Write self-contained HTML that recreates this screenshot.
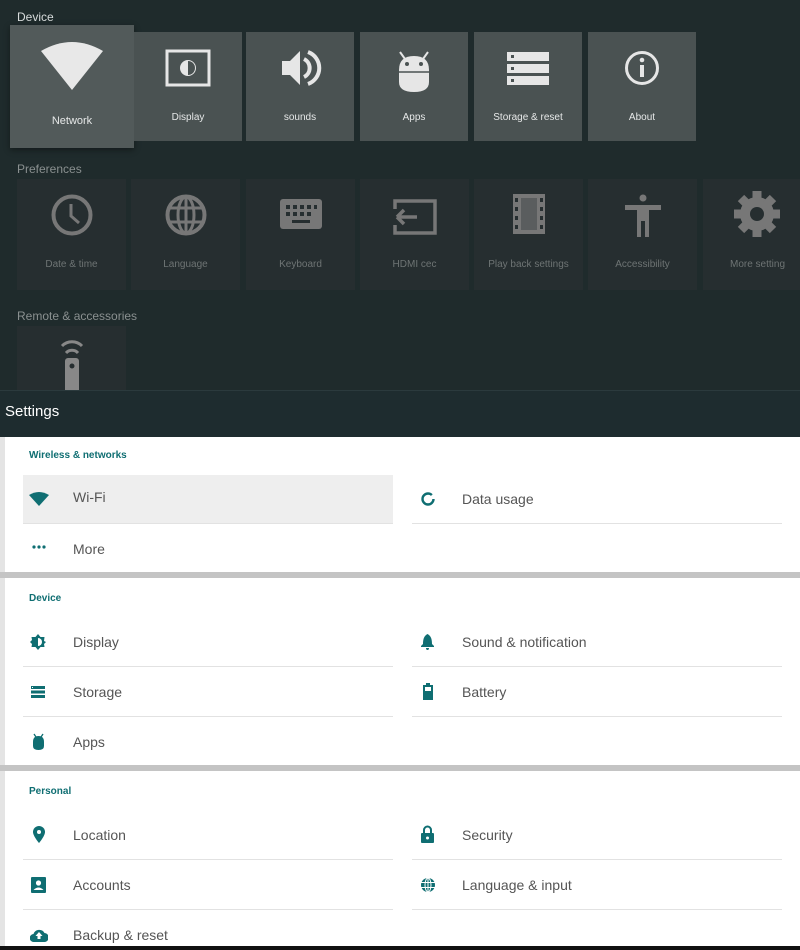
<!DOCTYPE html>
<html><head><meta charset="utf-8"><style>
*{margin:0;padding:0;box-sizing:border-box}
body{width:800px;height:950px;overflow:hidden;background:#1f2b2c;font-family:"Liberation Sans",sans-serif;position:relative}
.a{position:absolute}
.h{color:#d8dcdc;font-size:12px}
.hp{color:#8a9090;font-size:12px}
.t{position:absolute;background:#4a5252;width:108px;height:109px}
.t span{position:absolute;left:0;right:0;top:80px;text-align:center;color:#e6e8e8;font-size:10px}
.t svg{position:absolute;left:50%;top:16px;transform:translateX(-50%)}
.p{position:absolute;background:#262e30;width:109px;height:111px;top:179px}
.p span{position:absolute;left:0;right:0;top:80px;text-align:center;color:#6e7474;font-size:10px}
.p svg{position:absolute;left:50%;top:15px;transform:translateX(-50%)}
.sec{color:#0f6e72;font-size:10px;font-weight:bold;position:absolute;left:29px}
.it{position:absolute;font-size:14px;color:#555;}
.dv{position:absolute;height:1px;background:#e2e2e2}
.ic{position:absolute}
</style></head><body>
<div class="a h" style="left:17px;top:10px">Device</div>
<div class="t" style="left:10px;top:25px;width:124px;height:123px;background:#525a5a;box-shadow:0 2px 6px rgba(0,0,0,.4)">
<svg width="62" height="50" viewBox="0 0 62 50" style="top:17px"><path d="M0 9 Q31 -9 62 9 L31 48 Z" fill="#e8e8e8"/></svg>
<span style="top:90px;font-size:11px">Network</span></div>
<div class="t" style="left:134px;top:32px">
<svg width="48" height="40" viewBox="0 0 48 40"><rect x="3" y="3" width="42" height="34" fill="none" stroke="#e6e6e6" stroke-width="3"/><circle cx="24" cy="20" r="8" fill="#e6e6e6"/><path d="M24 13 A7 7 0 0 1 24 27 Z" fill="#4a5252"/></svg>
<span>Display</span></div>
<div class="t" style="left:246px;top:32px">
<svg width="44" height="40" viewBox="0 0 44 40"><path d="M4 13 H12 L22 3 V37 L12 27 H4 Z" fill="#e6e6e6"/><path d="M26 11 A10 10 0 0 1 26 29" fill="none" stroke="#e6e6e6" stroke-width="4"/><path d="M30 4 A17 17 0 0 1 30 36" fill="none" stroke="#e6e6e6" stroke-width="4"/></svg>
<span>sounds</span></div>
<div class="t" style="left:360px;top:32px">
<svg width="40" height="46" viewBox="0 0 40 46"><path d="M6 4 L11 11 M34 4 L29 11" stroke="#e6e6e6" stroke-width="2"/><path d="M5 22 Q5 8 20 8 Q35 8 35 22 V34 Q35 44 20 44 Q5 44 5 34 Z" fill="#e6e6e6"/><line x1="5" y1="24" x2="35" y2="24" stroke="#4a5252" stroke-width="1.5"/><circle cx="13" cy="16" r="2" fill="#4a5252"/><circle cx="27" cy="16" r="2" fill="#4a5252"/></svg>
<span>Apps</span></div>
<div class="t" style="left:474px;top:32px">
<svg width="44" height="34" viewBox="0 0 44 34" style="top:20px"><rect x="1" y="0" width="42" height="9" fill="#e6e6e6"/><rect x="1" y="12" width="42" height="9" fill="#e6e6e6"/><rect x="1" y="24" width="42" height="9" fill="#e6e6e6"/><rect x="5" y="3" width="3" height="3" fill="#4a5252"/><rect x="5" y="15" width="3" height="3" fill="#4a5252"/><rect x="5" y="27" width="3" height="3" fill="#4a5252"/></svg>
<span>Storage &amp; reset</span></div>
<div class="t" style="left:588px;top:32px">
<svg width="36" height="36" viewBox="0 0 36 36" style="top:18px"><circle cx="18" cy="18" r="15.5" fill="none" stroke="#e6e6e6" stroke-width="3"/><rect x="16" y="15" width="4" height="12" fill="#e6e6e6"/><circle cx="18" cy="10" r="2.3" fill="#e6e6e6"/></svg>
<span>About</span></div>

<div class="a hp" style="left:17px;top:162px">Preferences</div>
<div class="p" style="left:17px"><svg width="42" height="42" viewBox="0 0 42 42"><circle cx="21" cy="21" r="18.5" fill="none" stroke="#777" stroke-width="4"/><path d="M20 10 V22 L28 29" fill="none" stroke="#777" stroke-width="3"/></svg><span>Date &amp; time</span></div>
<div class="p" style="left:131px"><svg width="42" height="42" viewBox="0 0 42 42"><circle cx="21" cy="21" r="18.5" fill="none" stroke="#777" stroke-width="4"/><ellipse cx="21" cy="21" rx="8" ry="18" fill="none" stroke="#777" stroke-width="3"/><path d="M3 14 H39 M3 28 H39 M21 3 V39" stroke="#777" stroke-width="3"/></svg><span>Language</span></div>
<div class="p" style="left:246px"><svg width="42" height="34" viewBox="0 0 42 34" style="top:20px"><rect x="0" y="0" width="42" height="30" rx="3" fill="#777"/><g fill="#262e30"><rect x="6" y="6" width="4" height="4"/><rect x="13" y="6" width="4" height="4"/><rect x="20" y="6" width="4" height="4"/><rect x="27" y="6" width="4" height="4"/><rect x="34" y="6" width="3" height="4"/><rect x="6" y="13" width="4" height="4"/><rect x="13" y="13" width="4" height="4"/><rect x="20" y="13" width="4" height="4"/><rect x="27" y="13" width="4" height="4"/><rect x="12" y="21" width="18" height="3"/></g></svg><span>Keyboard</span></div>
<div class="p" style="left:360px"><svg width="48" height="40" viewBox="0 0 48 40" style="top:18px"><path d="M4 12 V4 H44 V36 H4 V28" fill="none" stroke="#777" stroke-width="3.5"/><path d="M6 20 H26 M6 20 L13 13 M6 20 L13 27" fill="none" stroke="#777" stroke-width="3.5"/></svg><span>HDMI cec</span></div>
<div class="p" style="left:474px"><svg width="36" height="42" viewBox="0 0 36 42"><rect x="2" y="0" width="32" height="40" fill="#777"/><rect x="10" y="4" width="16" height="32" fill="#262e30" opacity=".35"/><g fill="#262e30"><rect x="4" y="4" width="3" height="4"/><rect x="4" y="13" width="3" height="4"/><rect x="4" y="22" width="3" height="4"/><rect x="4" y="31" width="3" height="4"/><rect x="29" y="4" width="3" height="4"/><rect x="29" y="13" width="3" height="4"/><rect x="29" y="22" width="3" height="4"/><rect x="29" y="31" width="3" height="4"/></g></svg><span>Play back settings</span></div>
<div class="p" style="left:588px"><svg width="40" height="44" viewBox="0 0 40 44"><circle cx="20" cy="4" r="3.5" fill="#777"/><rect x="2" y="11" width="36" height="5" fill="#777"/><rect x="14" y="11" width="12" height="16" fill="#777"/><rect x="14" y="27" width="4" height="16" fill="#777"/><rect x="22" y="27" width="4" height="16" fill="#777"/></svg><span>Accessibility</span></div>
<div class="p" style="left:703px;width:97px"><svg width="50" height="50" viewBox="0 0 50 50" style="left:54px;top:10px"><g fill="#777"><circle cx="25" cy="25" r="17"/><g stroke="#777" stroke-width="9"><path d="M25 2 V48 M2 25 H48 M9 9 L41 41 M41 9 L9 41"/></g></g><circle cx="25" cy="25" r="7" fill="#262e30"/></svg><span style="left:12px">More setting</span></div>

<div class="a hp" style="left:17px;top:309px">Remote &amp; accessories</div>
<div class="p" style="left:17px;top:326px;height:64px;overflow:hidden"><svg width="26" height="64" viewBox="0 0 26 64" style="top:10px"><path d="M3 10 A14 14 0 0 1 23 10" fill="none" stroke="#888" stroke-width="3"/><path d="M7 17 A8 8 0 0 1 19 17" fill="none" stroke="#888" stroke-width="3"/><rect x="6" y="22" width="14" height="42" rx="3" fill="#888"/><circle cx="13" cy="30" r="2.5" fill="#262e30"/></svg></div>

<div class="a" style="left:0;top:390px;width:800px;height:48px;background:#1e2c2f;border-top:1px solid #2b3a3d"></div>
<div class="a" style="left:5px;top:403px;color:#fff;font-size:15px">Settings</div>
<div class="a" style="left:0;top:437px;width:800px;height:513px;background:#e4e4e4"></div>
<div class="a" style="left:5px;top:437px;width:795px;height:135px;background:#fff"></div>
<div class="a" style="left:5px;top:578px;width:795px;height:187px;background:#fff"></div>
<div class="a" style="left:5px;top:771px;width:795px;height:177px;background:#fff"></div>
<div class="a" style="left:0;top:572px;width:800px;height:6px;background:#c4c4c4"></div>
<div class="a" style="left:0;top:765px;width:800px;height:6px;background:#c4c4c4"></div>
<div class="a" style="left:0;top:946px;width:800px;height:4px;background:#111"></div>

<div class="sec" style="top:450px">Wireless &amp; networks</div>
<div class="a" style="left:23px;top:475px;width:370px;height:48px;background:#eeeeee"></div>
<svg class="ic" style="left:29px;top:492px" width="20" height="14" viewBox="0 0 20 14"><path d="M0 3 Q10 -3 20 3 L10 14 Z" fill="#0f6e72"/></svg>
<div class="it" style="left:73px;top:489px">Wi-Fi</div>
<div class="dv" style="left:23px;top:523px;width:370px"></div>
<svg class="ic" style="left:32px;top:545px" width="14" height="4"><circle cx="2" cy="2" r="1.6" fill="#0f6e72"/><circle cx="7" cy="2" r="1.6" fill="#0f6e72"/><circle cx="12" cy="2" r="1.6" fill="#0f6e72"/></svg>
<div class="it" style="left:73px;top:541px">More</div>
<svg class="ic" style="left:420px;top:491px" width="16" height="16"><circle cx="8" cy="8" r="5.5" fill="none" stroke="#0f6e72" stroke-width="2.4" stroke-dasharray="30 4.5"/></svg>
<div class="it" style="left:462px;top:491px">Data usage</div>
<div class="dv" style="left:412px;top:523px;width:370px"></div>

<div class="sec" style="top:593px">Device</div>
<svg class="ic" style="left:30px;top:634px" width="16" height="16" viewBox="0 0 16 16"><path d="M8 0 L10.5 3 L14.5 3 L14 7 L16 8 L14 10 L14.5 13 L10.5 13 L8 16 L5.5 13 L1.5 13 L2 10 L0 8 L2 6 L1.5 3 L5.5 3 Z" fill="#0f6e72"/><path d="M8 4 A4 4 0 0 1 8 12 Z" fill="#fff"/></svg>
<div class="it" style="left:73px;top:634px">Display</div>
<div class="dv" style="left:23px;top:666px;width:370px"></div>
<svg class="ic" style="left:31px;top:686px" width="14" height="12"><rect x="0" y="0" width="14" height="3" fill="#0f6e72"/><rect x="0" y="4.5" width="14" height="3" fill="#0f6e72"/><rect x="0" y="9" width="14" height="3" fill="#0f6e72"/><rect x="1" y="1" width="1" height="1" fill="#fff"/></svg>
<div class="it" style="left:73px;top:684px">Storage</div>
<div class="dv" style="left:23px;top:716px;width:370px"></div>
<svg class="ic" style="left:32px;top:733px" width="13" height="17" viewBox="0 0 13 17"><path d="M2 1 L4 4 M11 1 L9 4" stroke="#0f6e72" stroke-width="1.3"/><path d="M1 9 Q1 3 6.5 3 Q12 3 12 9 V13 Q12 17 6.5 17 Q1 17 1 13 Z" fill="#0f6e72"/></svg>
<div class="it" style="left:73px;top:734px">Apps</div>
<svg class="ic" style="left:421px;top:634px" width="13" height="16" viewBox="0 0 13 16"><path d="M6.5 0 C3 2 2 5 2 10 L0 12 V13 H13 V12 L11 10 C11 5 10 2 6.5 0Z M5 14 H8 Q8 16 6.5 16 Q5 16 5 14Z" fill="#0f6e72"/></svg>
<div class="it" style="left:462px;top:634px">Sound &amp; notification</div>
<div class="dv" style="left:412px;top:666px;width:370px"></div>
<svg class="ic" style="left:423px;top:683px" width="10" height="17"><rect x="3" y="0" width="4" height="2" fill="#0f6e72"/><rect x="0" y="2" width="10" height="15" fill="#0f6e72"/><rect x="2" y="4" width="6" height="4" fill="#fff"/></svg>
<div class="it" style="left:462px;top:684px">Battery</div>
<div class="dv" style="left:412px;top:716px;width:370px"></div>

<div class="sec" style="top:786px">Personal</div>
<svg class="ic" style="left:33px;top:826px" width="12" height="17" viewBox="0 0 12 17"><path d="M6 0 A6 6 0 0 1 12 6 C12 10 6 17 6 17 C6 17 0 10 0 6 A6 6 0 0 1 6 0Z" fill="#0f6e72"/><circle cx="6" cy="6" r="2" fill="#fff"/></svg>
<div class="it" style="left:73px;top:827px">Location</div>
<div class="dv" style="left:23px;top:859px;width:370px"></div>
<svg class="ic" style="left:31px;top:877px" width="15" height="16"><rect x="0" y="0" width="15" height="16" rx="1" fill="#0f6e72"/><circle cx="7.5" cy="6" r="2.6" fill="#fff"/><path d="M2.5 13 Q7.5 8 12.5 13Z" fill="#fff"/></svg>
<div class="it" style="left:73px;top:877px">Accounts</div>
<div class="dv" style="left:23px;top:909px;width:370px"></div>
<svg class="ic" style="left:30px;top:928px" width="18" height="14" viewBox="0 0 18 14"><path d="M4 14 A4 4 0 0 1 3.5 6 A6 6 0 0 1 14.5 5 A4.5 4.5 0 0 1 14 14 Z" fill="#0f6e72"/><path d="M9 4 L5.5 8 H7.5 V11 H10.5 V8 H12.5 Z" fill="#fff"/></svg>
<div class="it" style="left:73px;top:927px">Backup &amp; reset</div>
<svg class="ic" style="left:421px;top:825px" width="13" height="18" viewBox="0 0 13 18"><path d="M3 8 V5 A3.5 3.5 0 0 1 10 5 V8" fill="none" stroke="#0f6e72" stroke-width="2"/><rect x="0" y="8" width="13" height="10" rx="1" fill="#0f6e72"/><circle cx="6.5" cy="13" r="1.5" fill="#fff"/></svg>
<div class="it" style="left:462px;top:827px">Security</div>
<div class="dv" style="left:412px;top:859px;width:370px"></div>
<svg class="ic" style="left:420px;top:877px" width="16" height="16" viewBox="0 0 16 16"><circle cx="8" cy="8" r="7" fill="#0f6e72"/><g stroke="#fff" stroke-width="1" fill="none"><ellipse cx="8" cy="8" rx="3" ry="7"/><path d="M1 5.5 H15 M1 10.5 H15 M8 1 V15"/></g></svg>
<div class="it" style="left:462px;top:877px">Language &amp; input</div>
<div class="dv" style="left:412px;top:909px;width:370px"></div>
</body></html>
